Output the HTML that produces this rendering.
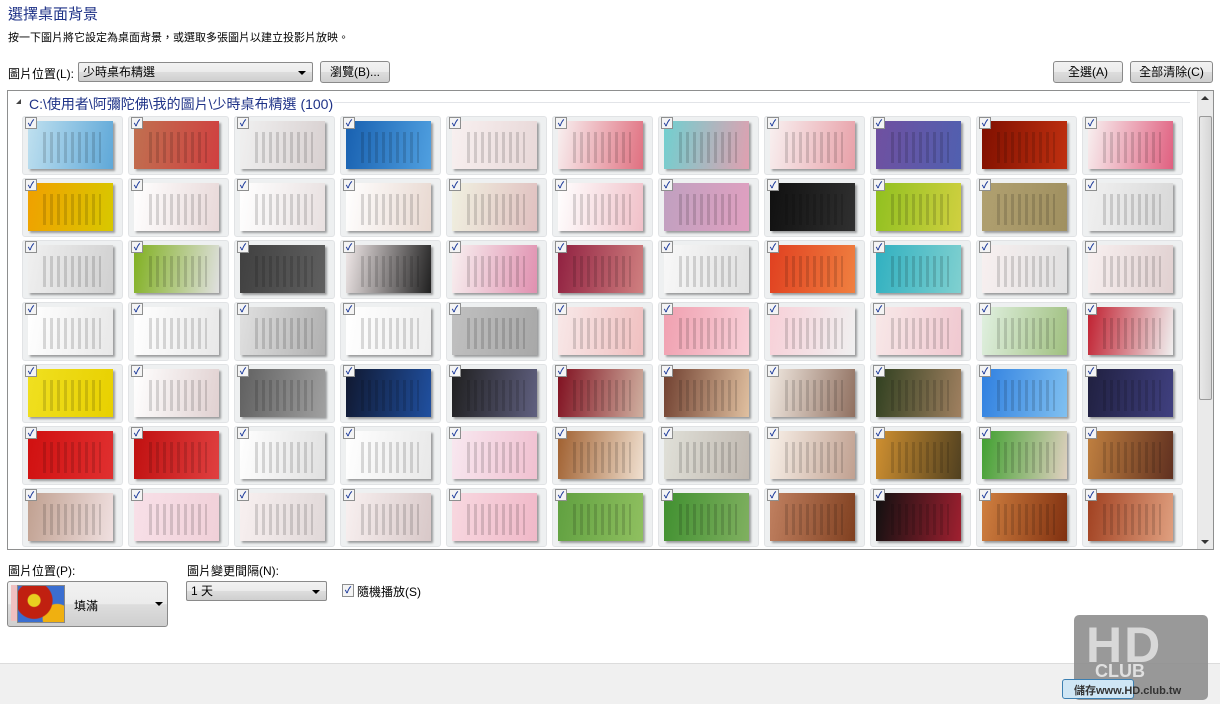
<!DOCTYPE html>
<html><head><meta charset="utf-8"><style>
*{margin:0;padding:0;box-sizing:border-box}
body{width:1220px;height:704px;background:#fff;font-family:"Liberation Sans","Noto Sans CJK TC",sans-serif;font-size:12px;color:#000;position:relative;overflow:hidden}
.a{position:absolute}
.btn{position:absolute;border:1px solid #8a8a8a;border-radius:3px;background:linear-gradient(#f2f2f2,#ebebeb 50%,#dddddd 51%,#cfcfcf);text-align:center;font-size:12px;line-height:20px}
.sel{position:absolute;border:1px solid #8a8a8a;border-radius:2px;background:linear-gradient(#f2f2f2,#ebebeb 50%,#dddddd 51%,#cfcfcf);padding-left:4px;line-height:18px}
.arr{position:absolute;right:6px;top:8px;width:0;height:0;border-left:4px solid transparent;border-right:4px solid transparent;border-top:4px solid #000}
.cell{position:absolute;width:101px;height:59px;background:#eef0f1;border:1px solid #e1e3e5;border-radius:3px}
.th{position:absolute;left:5px;top:4px;width:85px;height:48px;box-shadow:2px 2px 2px rgba(0,0,0,.35)}
.th:after{content:"";position:absolute;left:18%;right:14%;top:22%;bottom:12%;background:repeating-linear-gradient(90deg,rgba(0,0,0,.14) 0 3px,transparent 3px 7px)}
.cb{position:absolute;left:2px;top:0px;width:12px;height:12px;border:1px solid #8e8f8f;background:#f4f4f4;z-index:2;color:#1c3a9b;font-size:9px;line-height:10px;text-align:center;font-weight:bold}
</style></head><body>
<div class="a" style="left:8px;top:3px;font-size:15px;color:#1e3287">選擇桌面背景</div>
<div class="a" style="left:8px;top:29px;font-size:11px">按一下圖片將它設定為桌面背景，或選取多張圖片以建立投影片放映。</div>
<div class="a" style="left:8px;top:65px">圖片位置(L):</div>
<div class="sel" style="left:78px;top:62px;width:235px;height:20px">少時桌布精選<div class="arr"></div></div>
<div class="btn" style="left:320px;top:61px;width:70px;height:22px">瀏覽(B)...</div>
<div class="btn" style="left:1053px;top:61px;width:70px;height:22px">全選(A)</div>
<div class="btn" style="left:1130px;top:61px;width:83px;height:22px">全部清除(C)</div>
<div class="a" style="left:7px;top:90px;width:1207px;height:460px;border:1px solid #8e8f8f"></div>
<div class="a" style="left:16px;top:99px;width:0;height:0;border-left:5px solid transparent;border-bottom:5px solid #444;"></div>
<div class="a" style="left:29px;top:94px;font-size:14px;color:#1e3287">C:\使用者\阿彌陀佛\我的圖片\少時桌布精選 (100)</div>
<div class="a" style="left:334px;top:102px;width:856px;height:1px;background:#e2e4e8"></div>
<div class="a" style="left:1197px;top:91px;width:16px;height:458px;background:#eaeaea;border-left:1px solid #ddd"></div>
<div class="a" style="left:1199px;top:116px;width:13px;height:284px;background:linear-gradient(90deg,#e8e8e8,#d6d6d6);border:1px solid #999;border-radius:2px"></div>
<div class="a" style="left:1201px;top:96px;border-left:4px solid transparent;border-right:4px solid transparent;border-bottom:4px solid #333"></div>
<div class="a" style="left:1201px;top:540px;border-left:4px solid transparent;border-right:4px solid transparent;border-top:4px solid #333"></div>
<div id="g"></div>
<div class="a" style="left:8px;top:562px">圖片位置(P):</div>
<div class="btn" style="left:7px;top:581px;width:161px;height:46px"></div>
<div class="a" style="left:11px;top:585px;width:8px;height:36px;background:#f0c0c0"></div>
<div class="a" style="left:17px;top:585px;width:48px;height:38px;border:1px solid #888;background:radial-gradient(circle at 35% 40%,#e8d020 0 6px,#c02010 7px 18px,transparent 19px),radial-gradient(circle at 85% 90%,#f0b010 0 14px,transparent 15px),#3a6ed0"></div>
<div class="a" style="left:74px;top:597px">填滿</div>
<div class="a" style="left:155px;top:602px;border-left:4px solid transparent;border-right:4px solid transparent;border-top:4px solid #000"></div>
<div class="a" style="left:187px;top:562px">圖片變更間隔(N):</div>
<div class="sel" style="left:186px;top:581px;width:141px;height:20px">1 天<div class="arr"></div></div>
<div class="a cb" style="left:342px;top:584px;width:12px;height:13px">✓</div>
<div class="a" style="left:357px;top:583px">隨機播放(S)</div>
<div class="a" style="left:0;top:663px;width:1220px;height:41px;background:#f0f0f0;border-top:1px solid #dcdcdc"></div>
<div class="a" style="left:1074px;top:615px;width:134px;height:85px;background:#8e8e8e;border-radius:5px;opacity:.9"></div>
<div class="a" style="left:1086px;top:620px;font-size:50px;font-weight:bold;color:#d8d8d8;letter-spacing:2px;line-height:50px">HD</div>
<div class="a" style="left:1095px;top:662px;font-size:18px;font-weight:bold;color:#e0e0e0;line-height:18px">CLUB</div>
<div class="a" style="left:1062px;top:679px;width:72px;height:20px;border:1px solid #3c7fb1;border-radius:3px;background:#cfe6f5"></div>
<div class="a" style="left:1074px;top:682px;font-size:11px;font-weight:bold;color:#333">儲存www.HD.club.tw</div>
<script>
var c=[
"#bfe0ef,#5fa8d8","#c07050,#d04040","#f0f0f0,#d8d0d0","#1860b0,#50a0e0","#f8f0f0,#e8d8d8","#f8f0f0,#e07080","#70d0d0,#e0a0b0","#f8f0f0,#e8a0a8","#7050a0,#5060b0","#801000,#c03010","#f8f0f0,#e06080",
"#f0a000,#d8c800","#ffffff,#e8d8d8","#ffffff,#e8e0e0","#ffffff,#e8d8d0","#f0f0e0,#e0c0c0","#ffffff,#f0c0c8","#c0a0c0,#e0a0c0","#101010,#303030","#90c020,#d0d040","#b0a070,#a09060","#f0f0f0,#d8d8d8",
"#f0f0f0,#d0d0d0","#80b020,#e0e0e0","#404040,#606060","#f0e8e8,#202020","#f8f0f0,#e090b0","#902040,#d08080","#f8f8f8,#e0e0e0","#e04020,#f08040","#30b0c0,#80d0d0","#f8f0f0,#e0e0e0","#f8f0f0,#e0d0d0",
"#ffffff,#e8e8e8","#ffffff,#e8e8e8","#e0e0e0,#b0b0b0","#ffffff,#eeeeee","#c0c0c0,#a8a8a8","#f8e8e8,#f0c0c0","#f0a0b0,#f8d0d8","#f8d0d8,#f0f0f0","#f8e8e8,#f0c8d0","#e0f0e0,#a0c080","#c02030,#f0f0f0",
"#f0e020,#e8d000","#ffffff,#e0d0d0","#606060,#a0a0a0","#101830,#2050a0","#202020,#606080","#801020,#d0b0a0","#704030,#e0c0a0","#f0e8e0,#907060","#304020,#a08060","#3080e0,#80c0f0","#202040,#404080",
"#d01010,#e03030","#c01010,#e04040","#ffffff,#e0e0e0","#ffffff,#e8e8e8","#f8e8f0,#f0c0d0","#a06030,#f0e0d0","#e0e0d8,#c0b8b0","#f8f0e8,#c0a090","#d09030,#504020","#40a030,#e0d0c0","#c08040,#603020",
"#c0a090,#f0e0e0","#f8e0e8,#f0d0d8","#f8f0f0,#e0d8d8","#f8f0f0,#d8c8c8","#f8d8e0,#f0b8c8","#60a040,#90c060","#409030,#80b060","#c08060,#804020","#101010,#a02030","#d08040,#803010","#a04020,#e0a080"];
var h="";for(var r=0;r<7;r++)for(var k=0;k<11;k++){var x=22+k*106,y=116+r*62;
h+='<div class="cell" style="left:'+x+'px;top:'+y+'px"><div class="cb">✓</div><div class="th" style="background:linear-gradient(100deg,'+c[r*11+k]+')"></div></div>';}
document.getElementById("g").innerHTML=h;
</script>
</body></html>
